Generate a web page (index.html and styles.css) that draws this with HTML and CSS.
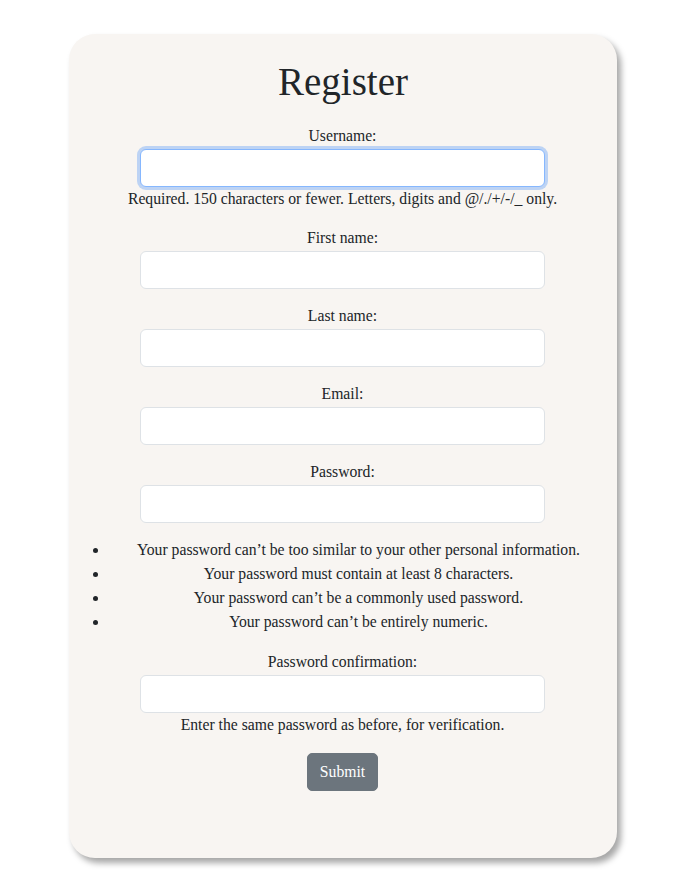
FILE: index.html
```html
<!DOCTYPE html>
<html lang="en">
<head>
<meta charset="utf-8">
<title>Register</title>
<link rel="stylesheet" href="styles.css">
</head>
<body>
<div class="page">
  <form class="card">
    <h1 class="title">Register</h1>
    <div class="field">
      <label class="label" for="u">Username:</label>
      <input class="input input-focus" id="u" type="text">
      <span class="help">Required. 150 characters or fewer. Letters, digits and @/./+/-/_ only.</span>
    </div>
    <div class="field">
      <label class="label" for="f">First name:</label>
      <input class="input" id="f" type="text">
    </div>
    <div class="field">
      <label class="label" for="l">Last name:</label>
      <input class="input" id="l" type="text">
    </div>
    <div class="field">
      <label class="label" for="e">Email:</label>
      <input class="input" id="e" type="email">
    </div>
    <div class="field">
      <label class="label" for="p">Password:</label>
      <input class="input" id="p" type="password">
    </div>
    <ul class="rules">
      <li>Your password can’t be too similar to your other personal information.</li>
      <li>Your password must contain at least 8 characters.</li>
      <li>Your password can’t be a commonly used password.</li>
      <li>Your password can’t be entirely numeric.</li>
    </ul>
    <div class="field">
      <label class="label" for="p2">Password confirmation:</label>
      <input class="input" id="p2" type="password">
      <span class="help">Enter the same password as before, for verification.</span>
    </div>
    <div class="actions">
      <button class="btn" type="button">Submit</button>
    </div>
  </form>
</div>
</body>
</html>
```
FILE: styles.css
```css
html, body {
  margin: 0;
  padding: 0;
  background: #ffffff;
}
body {
  font-family: "Liberation Serif", "Times New Roman", serif;
  color: #212529;
  font-size: 15.7px;
}
.page {
  padding: 34px 0 28px 69px;
}
.card {
  width: 548px;
  box-sizing: border-box;
  background: #f8f5f2;
  border-radius: 26px;
  box-shadow: 4px 5px 6px rgba(0, 0, 0, 0.35);
  padding: 24px 0 67px 0;
  display: flex;
  flex-direction: column;
  align-items: stretch;
}
.title {
  margin: 0 0 18px 0;
  font-weight: 400;
  font-size: 39px;
  line-height: 48px;
  text-align: center;
}
.field {
  display: flex;
  flex-direction: column;
  align-items: center;
  margin-bottom: 15px;
  padding-right: 1px;
}
.label {
  line-height: 24px;
  margin-bottom: 1px;
}
.input {
  width: 405px;
  height: 38px;
  box-sizing: border-box;
  border: 1px solid #dee2e6;
  border-radius: 6px;
  background: #ffffff;
  outline: none;
  margin: 0;
  padding: 6px 12px;
  font: inherit;
}
.input-focus {
  border-color: #86b7fe;
  box-shadow: 0 0 0 3px rgba(13, 110, 253, 0.25);
}
.help {
  line-height: 24px;
  text-align: center;
}
.rules {
  margin: 0 9px 16px 0;
  padding: 0 0 0 40px;
  text-align: center;
  line-height: 24px;
}
.actions {
  display: flex;
  justify-content: center;
  margin-top: 1px;
  padding-right: 1px;
}
.btn {
  font: inherit;
  font-size: 15.7px;
  color: #ffffff;
  background: #6c757d;
  border: 1px solid #6c757d;
  border-radius: 5px;
  width: 71px;
  height: 38px;
  padding: 0;
}
```
